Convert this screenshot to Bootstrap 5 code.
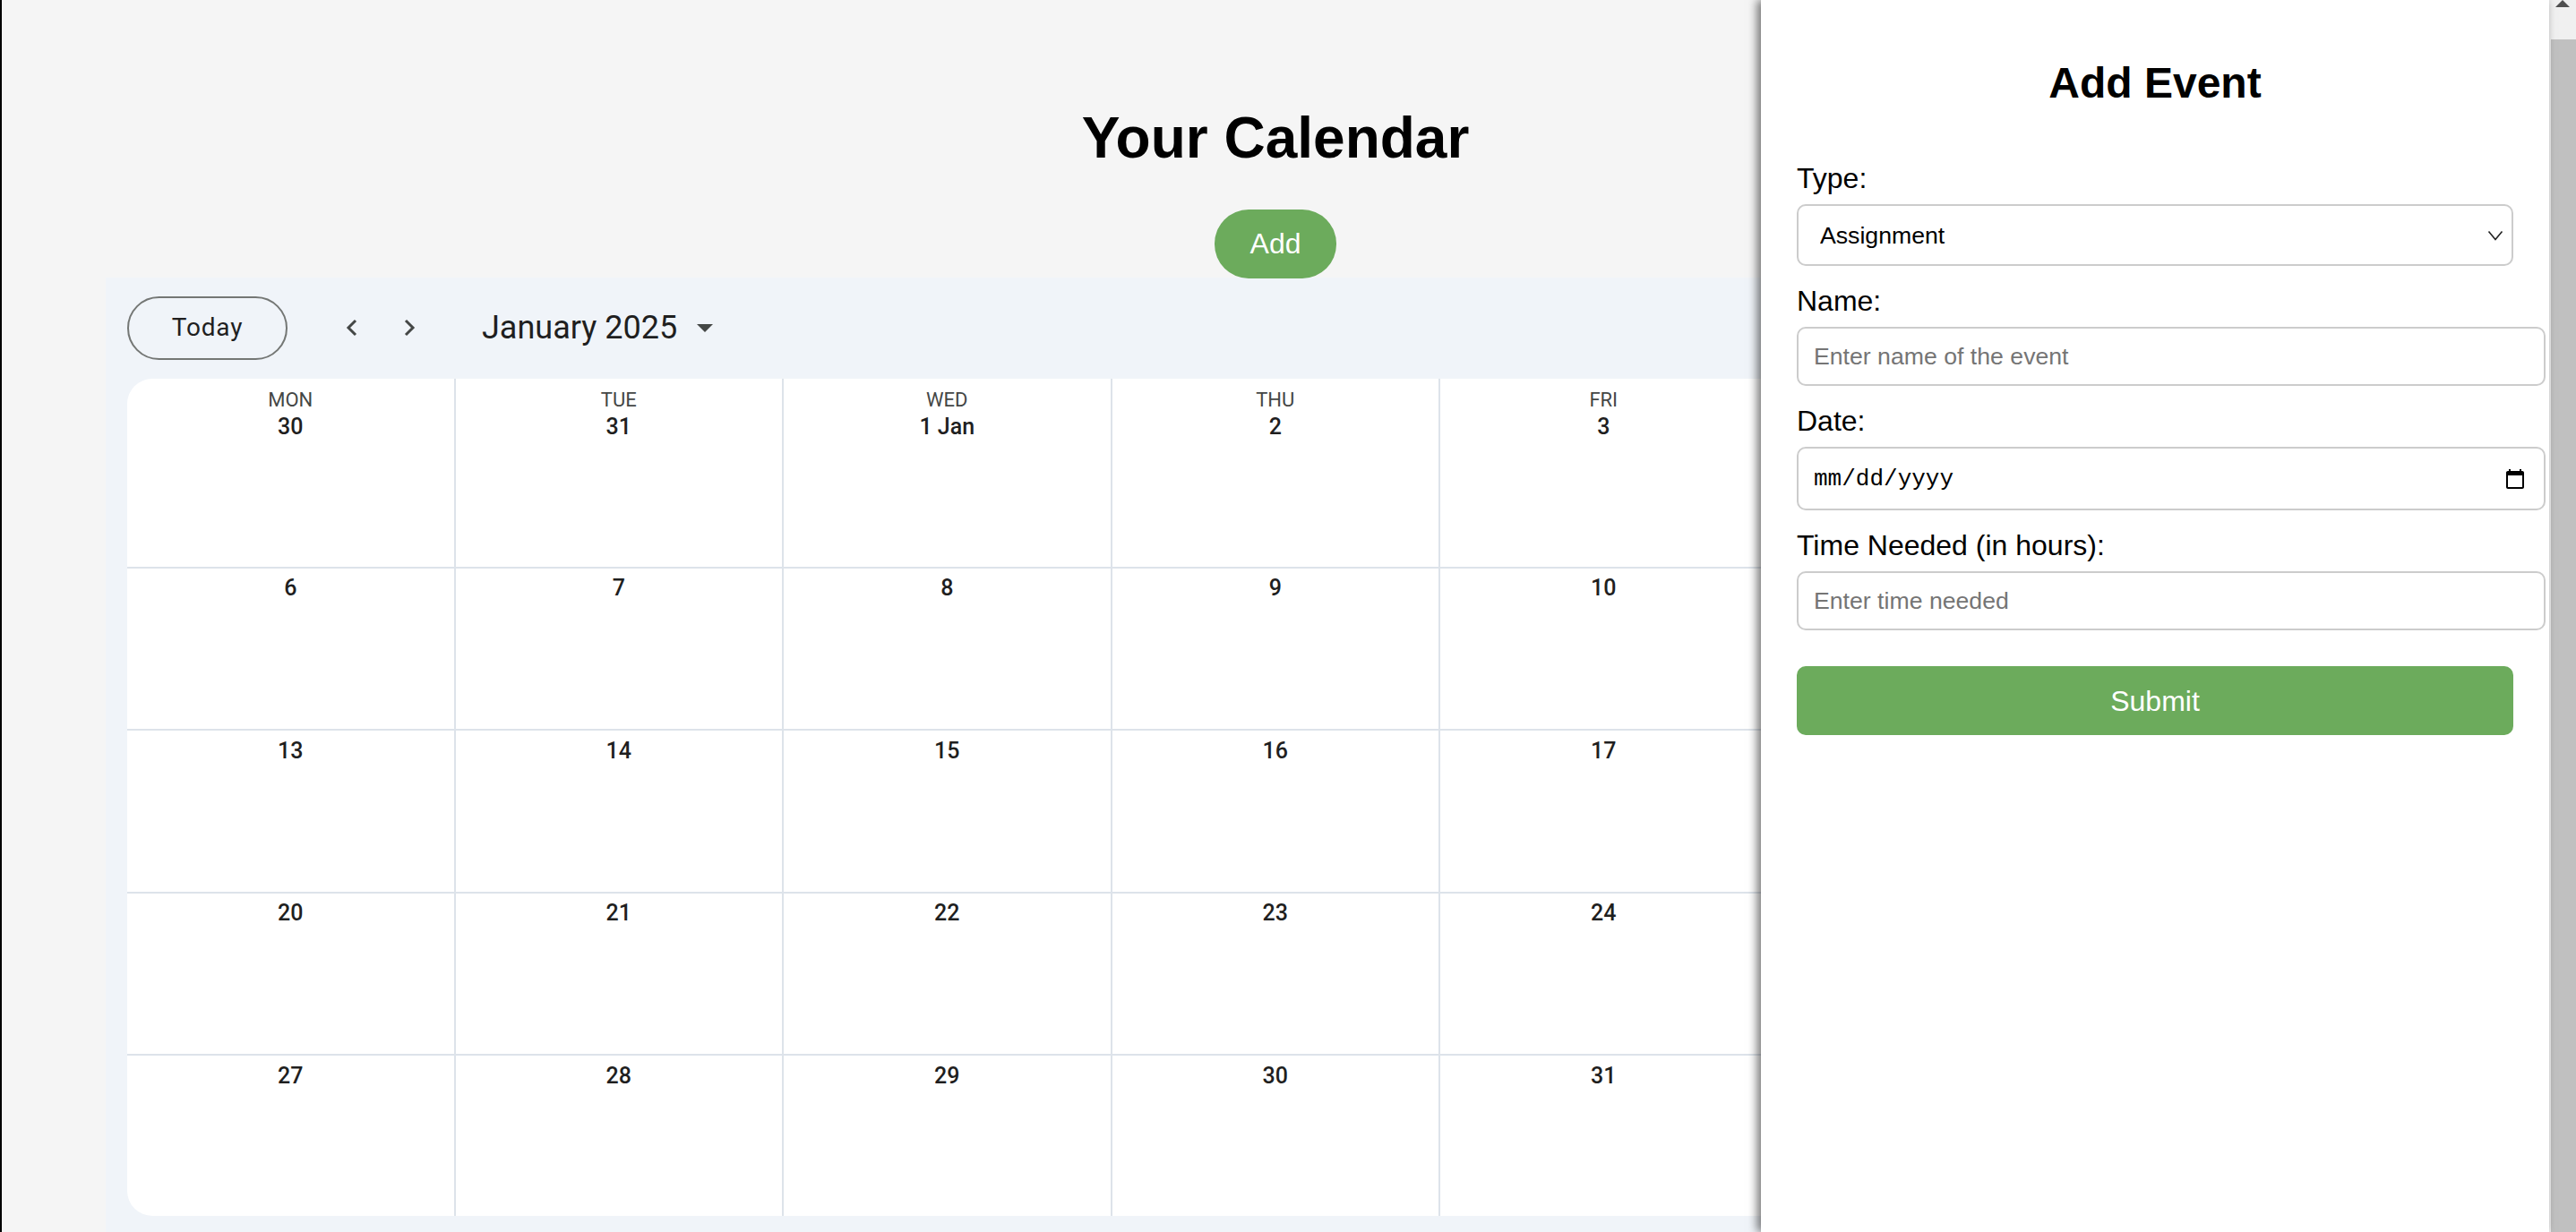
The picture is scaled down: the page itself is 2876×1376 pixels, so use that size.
<!DOCTYPE html>
<html lang="en">
<head>
  <meta charset="UTF-8">
  <meta name="viewport" content="width=device-width, initial-scale=1.0">
  <title>Your Calendar</title>
  <link href="https://cdn.jsdelivr.net/npm/bootstrap@5.3.0/dist/css/bootstrap.min.css" rel="stylesheet">
  <style>
    html, body {
      height: 100%;
      overflow: hidden;
    }
    body {
      background-color: #f5f5f5;
      color: #000;
      font-family: "Liberation Sans", Arial, sans-serif;
    }
    .page-main {
      width: 2846px;
      border-left: 2px solid #000;
      flex: none;
    }
    .page-title {
      font-size: 64px;
      font-weight: 700;
      line-height: 76.8px;
      padding-top: 116px;
      margin-bottom: 41px;
    }
    .btn-green {
      background-color: #6cab5c;
      border: 0;
      color: #fff;
      font-size: 32px;
    }
    .btn-green:hover {
      background-color: #5f9a50;
      color: #fff;
    }
    .btn-add {
      width: 136px;
      height: 77px;
      border-radius: 38px;
      margin-bottom: -1px;
    }
    .cal-frame {
      margin: 0 118px 0 116px;
      padding: 0 24px 18px;
      background-color: #f0f4f9;
      font-family: Roboto, Arial, sans-serif;
      color: #1f1f1f;
    }
    .cal-toolbar {
      height: 113px;
    }
    .btn-today {
      width: 179px;
      height: 71px;
      margin-right: 65px;
      border: 2px solid #747775;
      border-radius: 36px;
      background: transparent;
      color: #1f1f1f;
      font-size: 28px;
      letter-spacing: .8px;
    }
    .cal-arrow {
      width: 13px;
      height: 20px;
      margin-right: 52px;
      flex: none;
    }
    .cal-month {
      font-size: 36px;
      line-height: 1;
      margin-left: 22px;
      margin-right: 22px;
    }
    .cal-caret {
      width: 0;
      height: 0;
      border-left: 9px solid transparent;
      border-right: 9px solid transparent;
      border-top: 9px solid #444746;
    }
    .cal-grid {
      display: grid;
      grid-template-columns: repeat(7, 366.5px);
      grid-template-rows: 212px 181.5px 181.5px 181.5px 178.5px;
      background-color: #fff;
      border-radius: 28px;
      overflow: hidden;
    }
    .cal-cell {
      border-right: 2px solid #dde3ea;
      border-bottom: 2px solid #dde3ea;
      text-align: center;
      padding-top: 7.5px;
    }
    .cal-cell.is-last {
      border-bottom: 0;
    }
    .cal-dow {
      font-size: 22px;
      line-height: 27px;
      color: #444746;
      padding-top: 3px;
    }
    .cal-day {
      font-size: 25px;
      font-weight: 500;
      line-height: 30px;
    }
    .cal-dow + .cal-day {
      margin-top: 2px;
    }
    .side-panel {
      top: 0;
      right: 30px;
      bottom: 0;
      width: 880px;
      padding: 0 40px;
      background-color: #fff;
      box-shadow: -4px 0 10px rgba(0, 0, 0, .55);
    }
    .side-title {
      font-size: 48px;
      font-weight: 700;
      line-height: 58px;
      padding-top: 64px;
      margin-bottom: 59px;
    }
    .field-label {
      display: block;
      font-size: 32px;
      line-height: 37px;
      margin-top: 21px;
      margin-bottom: 10px;
    }
    .field-label.is-first {
      margin-top: 0;
    }
    .side-panel .form-select,
    .side-panel .form-control {
      border: 2px solid #ccc;
      border-radius: 10px;
      color: #000;
      font-family: "Liberation Sans", Arial, sans-serif;
      font-size: 26.67px;
    }
    .side-panel .form-select {
      height: 69px;
      padding: 0 40px 0 24px;
      background-image: url("data:image/svg+xml,%3csvg xmlns='http://www.w3.org/2000/svg' viewBox='0 0 18 12'%3e%3cpath fill='none' stroke='%23222' stroke-width='1.6' d='M1.5 1.5 9 10.5l7.5-9'/%3e%3c/svg%3e");
      background-position: right 9px center;
      background-size: 18px 12px;
    }
    .side-panel .form-control {
      width: calc(100% + 36px);
      max-width: none;
      height: 66px;
      padding: 0 17px;
    }
    .side-panel .form-control::placeholder {
      color: #757575;
      opacity: 1;
    }
    .side-panel .field-date {
      height: 71px;
      padding-top: 2px;
      font-family: "Liberation Mono", monospace;
      font-size: 26px;
    }
    .btn-submit {
      width: 100%;
      height: 77px;
      margin-top: 40px;
      border-radius: 10px;
    }
    .fake-scroll {
      width: 30px;
      background-color: #f0f0f0;
    }
    .fake-scroll-up {
      height: 44px;
    }
    .fake-scroll-thumb {
      margin-left: 2px;
      background-color: #c0c0c0;
    }
  </style>
</head>
<body class="d-flex m-0">
  <main class="page-main">
    <h1 class="page-title text-center">Your Calendar</h1>
    <div class="text-center">
      <button class="btn btn-green btn-add p-0" type="button">Add</button>
    </div>

    <div class="cal-frame">
      <div class="cal-toolbar d-flex align-items-center">
        <button class="btn btn-today p-0" type="button">Today</button>
        <svg class="cal-arrow" viewBox="0 0 13 20" fill="none" stroke="#444746" stroke-width="3"><path d="M11 2 3 10l8 8"/></svg>
        <svg class="cal-arrow" viewBox="0 0 13 20" fill="none" stroke="#444746" stroke-width="3"><path d="M2 2l8 8-8 8"/></svg>
        <span class="cal-month">January 2025</span>
        <span class="cal-caret"></span>
      </div>
      <div class="cal-grid" id="calGrid"></div>
    </div>
  </main>

  <div class="fake-scroll d-flex flex-column flex-shrink-0">
    <div class="fake-scroll-up d-flex justify-content-center">
      <svg width="16" height="9" viewBox="0 0 16 9"><path d="M8 0l8 8H0z" fill="#505050"/></svg>
    </div>
    <div class="fake-scroll-thumb flex-grow-1"></div>
  </div>

  <aside class="side-panel position-absolute">
    <h2 class="side-title text-center">Add Event</h2>
    <form>
      <label class="field-label is-first" for="eventType">Type:</label>
      <select class="form-select" id="eventType">
        <option>Assignment</option>
        <option>Exam</option>
        <option>Project</option>
      </select>

      <label class="field-label" for="eventName">Name:</label>
      <input class="form-control" id="eventName" type="text" placeholder="Enter name of the event">

      <label class="field-label" for="eventDate">Date:</label>
      <input class="form-control field-date" id="eventDate" type="date">

      <label class="field-label" for="eventTime">Time Needed (in hours):</label>
      <input class="form-control" id="eventTime" type="text" placeholder="Enter time needed">

      <button class="btn btn-green btn-submit p-0 d-block" type="button">Submit</button>
    </form>
  </aside>

  <script>
    const dows = ["MON", "TUE", "WED", "THU", "FRI", "SAT", "SUN"];
    const days = [
      "30", "31", "1 Jan", "2", "3", "4", "5",
      "6", "7", "8", "9", "10", "11", "12",
      "13", "14", "15", "16", "17", "18", "19",
      "20", "21", "22", "23", "24", "25", "26",
      "27", "28", "29", "30", "31", "1 Feb", "2"
    ];

    function renderGrid() {
      const grid = document.getElementById("calGrid");
      days.forEach((day, index) => {
        const cell = document.createElement("div");
        cell.className = "cal-cell" + (index >= 28 ? " is-last" : "");
        const head = index < 7 ? `<div class="cal-dow">${dows[index]}</div>` : "";
        cell.innerHTML = `${head}<div class="cal-day">${day}</div>`;
        grid.appendChild(cell);
      });
    }

    renderGrid();
  </script>
  <script src="https://cdn.jsdelivr.net/npm/bootstrap@5.3.0/dist/js/bootstrap.bundle.min.js"></script>
</body>
</html>
